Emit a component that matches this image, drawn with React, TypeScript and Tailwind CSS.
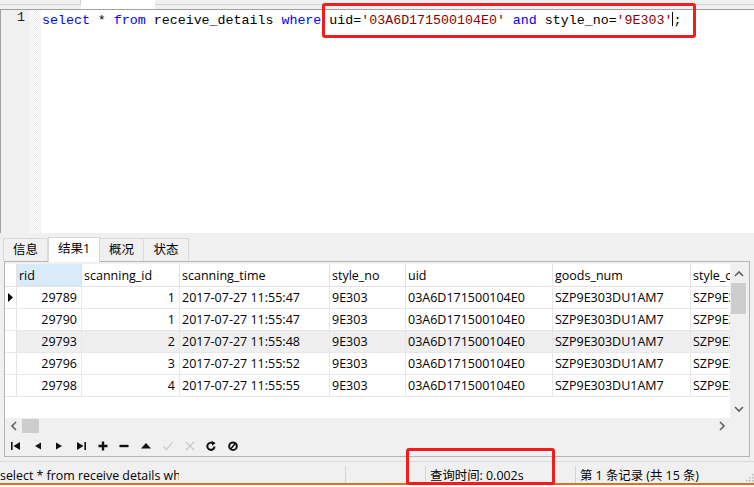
import type { ReactNode } from "react";

const UI_FONT = "font-['Open_Sans','Noto_Sans_CJK_SC',sans-serif]";

const columns = [
  { key: "rid", label: "rid", width: "w-[65px]", right: true },
  { key: "scanning_id", label: "scanning_id", width: "w-[98px]", right: true },
  { key: "scanning_time", label: "scanning_time", width: "w-[150px]" },
  { key: "style_no", label: "style_no", width: "w-[76px]" },
  { key: "uid", label: "uid", width: "w-[147px]" },
  { key: "goods_num", label: "goods_num", width: "w-[138px]" },
  { key: "style_c", label: "style_code", width: "w-[40px]" },
];

const rows = [
  { rid: "29789", scanning_id: "1", scanning_time: "2017-07-27 11:55:47" },
  { rid: "29790", scanning_id: "1", scanning_time: "2017-07-27 11:55:47" },
  { rid: "29793", scanning_id: "2", scanning_time: "2017-07-27 11:55:48" },
  { rid: "29796", scanning_id: "3", scanning_time: "2017-07-27 11:55:52" },
  { rid: "29798", scanning_id: "4", scanning_time: "2017-07-27 11:55:55" },
].map((r) => ({
  ...r,
  style_no: "9E303",
  uid: "03A6D171500104E0",
  goods_num: "SZP9E303DU1AM7",
  style_c: "SZP9E303DU1",
}));

function Kw({ children }: { children: ReactNode }) {
  return <span className="text-[#0000ff]">{children}</span>;
}

function Str({ children }: { children: ReactNode }) {
  return <span className="text-[#8b0000]">{children}</span>;
}

function Editor() {
  return (
    <div className="flex h-[224px] border-t border-l border-[#a0a0a0] bg-white">
      <div className="w-[28px] bg-[#f0f0f0] pr-[4px] text-right font-['Liberation_Mono',monospace] text-[13.3px] leading-[15px] text-[#222]">
        1
      </div>
      <div className="w-[12px] bg-[repeating-conic-gradient(#ececec_0_25%,#ffffff_0_50%)] bg-[length:2px_2px]" />
      <div className="flex-1 whitespace-pre pl-[1px] font-['Liberation_Mono',monospace] text-[13.3px] leading-[15px] text-black">
        <Kw>select</Kw> * <Kw>from</Kw> receive_details <Kw>where</Kw> uid=
        <Str>'03A6D171500104E0'</Str> <Kw>and</Kw> style_no=<Str>'9E303'</Str>
        <span className="inline-block h-[14px] w-px translate-y-[2px] bg-black align-baseline" />;
      </div>
    </div>
  );
}

function ResultTabs() {
  const tabs = ["信息", "结果1", "概况", "状态"];
  return (
    <div className={`flex h-[28px] items-end pl-[3px] ${UI_FONT} text-[12.5px]`}>
      {tabs.map((t, i) =>
        i === 1 ? (
          <div
            key={t}
            className="relative z-10 -mb-px flex h-[25px] w-[52px] items-center justify-center border border-b-0 border-[#d9d9d9] bg-white pb-[1px]"
          >
            {t}
          </div>
        ) : (
          <div
            key={t}
            className={`flex h-[23px] items-center justify-center border border-b-0 border-[#d9d9d9] bg-[#f0f0f0] ${
              i === 3 ? "w-[46px]" : "w-[45px]"
            } ${i > 1 ? "-ml-px" : ""}`}
          >
            {t}
          </div>
        ),
      )}
    </div>
  );
}

function Chevron({ dir }: { dir: "up" | "down" | "left" | "right" }) {
  const d = {
    up: "M1 6 L5 2 L9 6",
    down: "M1 2 L5 6 L9 2",
    left: "M6 1 L2 5 L6 9",
    right: "M2 1 L6 5 L2 9",
  }[dir];
  const vertical = dir === "up" || dir === "down";
  return (
    <svg
      viewBox={vertical ? "0 0 10 8" : "0 0 8 10"}
      className={vertical ? "h-[8px] w-[10px]" : "h-[10px] w-[8px]"}
      fill="none"
      stroke="#606060"
      strokeWidth="1.6"
    >
      <path d={d} />
    </svg>
  );
}

function Grid() {
  return (
    <div className={`flex h-[169px] ${UI_FONT} text-[12.5px] text-black`}>
      <div className="flex w-[725px] flex-col">
        <div className="flex-1 overflow-hidden bg-white">
          <div className="flex h-[23px] border-b border-[#e3e3e3]">
            <div className="w-[12px] shrink-0 border-r border-[#e3e3e3]" />
            {columns.map((c, i) => (
              <div
                key={c.key}
                className={`${c.width} shrink-0 overflow-hidden whitespace-nowrap border-r border-[#e3e3e3] pt-[1px] pl-[2px] leading-[21px] ${
                  i === 0 ? "bg-[#d9eaf8]" : ""
                }`}
              >
                {c.label}
              </div>
            ))}
          </div>
          {rows.map((r, ri) => (
            <div key={r.rid} className="flex h-[22px] border-b border-[#e8e8e8]">
              <div className="flex w-[12px] shrink-0 items-center justify-center border-r border-[#e3e3e3]">
                {ri === 0 && (
                  <svg viewBox="0 0 5 9" className="h-[9px] w-[5px]">
                    <path d="M0 0 L5 4.5 L0 9 Z" fill="#000" />
                  </svg>
                )}
              </div>
              {columns.map((c) => (
                <div
                  key={c.key}
                  className={`${c.width} shrink-0 overflow-hidden whitespace-nowrap border-r border-[#e8e8e8] pt-[1px] leading-[20px] ${
                    c.right ? "pr-[4px] text-right" : "pl-[2px]"
                  } ${ri === 2 ? "bg-[#efefef]" : ""}`}
                >
                  {r[c.key as keyof typeof r]}
                </div>
              ))}
            </div>
          ))}
        </div>
        <div className="flex h-[15px] items-center bg-[#f0f0f0]">
          <div className="flex w-[17px] justify-center">
            <Chevron dir="left" />
          </div>
          <div className="h-[14px] w-[17px] bg-[#cdcdcd]" />
          <div className="flex-1" />
          <div className="flex w-[17px] justify-center">
            <Chevron dir="right" />
          </div>
        </div>
      </div>
      <div className="flex w-[17px] flex-col bg-[#f0f0f0]">
        <div className="flex h-[19px] items-center justify-center">
          <Chevron dir="up" />
        </div>
        <div className="mx-auto h-[31px] w-[15px] bg-[#cdcdcd]" />
        <div className="flex-1" />
        <div className="flex h-[19px] items-center justify-center">
          <Chevron dir="down" />
        </div>
        <div className="h-[15px]" />
      </div>
    </div>
  );
}

function Toolbar() {
  const c = "#111";
  const off = "#c8c8c8";
  const icons: ReactNode[] = [
    <path key="a" d="M1 2 H2.6 V10 H1 Z M10 2 L3.5 6 L10 10 Z" fill={c} />,
    <path key="b" d="M9 2.5 L3 6 L9 9.5 Z" fill={c} />,
    <path key="c" d="M3 2.5 L9 6 L3 9.5 Z" fill={c} />,
    <path key="d" d="M2 2 L8.5 6 L2 10 Z M9.4 2 H11 V10 H9.4 Z" fill={c} />,
    <path key="e" d="M4.8 1.5 H7.2 V4.8 H10.5 V7.2 H7.2 V10.5 H4.8 V7.2 H1.5 V4.8 H4.8 Z" fill={c} />,
    <path key="f" d="M1.5 4.8 H10.5 V7.2 H1.5 Z" fill={c} />,
    <path key="g" d="M6 3 L11 8.5 H1 Z" fill={c} />,
    <path key="h" d="M1.5 6.5 L4.5 9.5 L10.5 2" fill="none" stroke={off} strokeWidth="1.2" />,
    <path key="i" d="M2 2 L10 10 M10 2 L2 10" fill="none" stroke={off} strokeWidth="1.2" />,
    <g key="j">
      <path d="M9.5 6.5 A3.6 3.6 0 1 1 7.8 3.2" fill="none" stroke={c} strokeWidth="2" />
      <path d="M6.5 0.8 L10.6 3 L7.2 5.8 Z" fill={c} />
    </g>,
    <g key="k">
      <circle cx="6" cy="6.2" r="3.8" fill="none" stroke={c} strokeWidth="2" />
      <path d="M8.3 3.4 L3.7 9" stroke={c} strokeWidth="1.5" />
    </g>,
  ];
  return (
    <div className="flex h-[23px] items-center gap-[9.7px] pt-[3px] pl-[5px]">
      {icons.map((ic, i) => (
        <svg key={i} viewBox="0 0 12 12" className="h-[12px] w-[12px]">
          {ic}
        </svg>
      ))}
    </div>
  );
}

function StatusBar() {
  const section = "flex h-[17px] items-center pt-[4px]";
  return (
    <div className={`flex h-[22px] items-end border-t border-[#dadada] ${UI_FONT} text-[12.4px] text-black`}>
      <div className={`${section} w-[345px] overflow-hidden whitespace-nowrap`}>
        <span className="inline-block w-[179px] overflow-hidden">
          select * from receive details where uid='03A6D171500104E0'
        </span>
      </div>
      <div className="h-[17px] w-[80px] border-l border-[#d4d4d4]" />
      <div className={`${section} w-[150px] border-l border-[#d4d4d4] pl-[4px]`}>查询时间: 0.002s</div>
      <div className={`${section} flex-1 border-l border-[#d4d4d4] pl-[4px]`}>第 1 条记录 (共 15 条)</div>
      <div className="relative h-full w-[10px]">
        <svg viewBox="0 0 10 10" className="absolute bottom-[1px] right-0 h-[10px] w-[10px]">
          {[
            [8, 2],
            [5, 5],
            [8, 5],
            [2, 8],
            [5, 8],
            [8, 8],
          ].map(([x, y]) => (
            <rect key={`${x}-${y}`} x={x} y={y} width="1.5" height="1.5" fill="#b8b8b8" />
          ))}
        </svg>
      </div>
    </div>
  );
}

export default function App() {
  return (
    <div className="relative h-[487px] w-[754px] overflow-hidden bg-[#f0f0f0]">
      <div className="flex h-[9px]">
        <div className="h-[5px] w-[81px] border-r border-b border-[#d0d0d0]" />
        <div className="h-full w-[74px] bg-white" />
        <div className="h-[5px] flex-1 border-b border-[#d0d0d0]" />
      </div>
      <Editor />
      <ResultTabs />
      <div className="mx-[4px] border border-[#b4b4b4] bg-[#f0f0f0] pt-[2px]">
        <Grid />
        <Toolbar />
      </div>
      <div className="h-[4px]" />
      <StatusBar />
      <div className="h-[1.5px] bg-[#e0701c]" />
      <div className="h-[3px] bg-white" />

      <div className="pointer-events-none absolute left-[322px] top-[3px] h-[35px] w-[374px] rounded-[3px] border-[3px] border-[#f21c1c]" />
      <div className="pointer-events-none absolute left-[406px] top-[448px] h-[37px] w-[149px] rounded-[3px] border-[3px] border-[#f21c1c]" />
    </div>
  );
}
